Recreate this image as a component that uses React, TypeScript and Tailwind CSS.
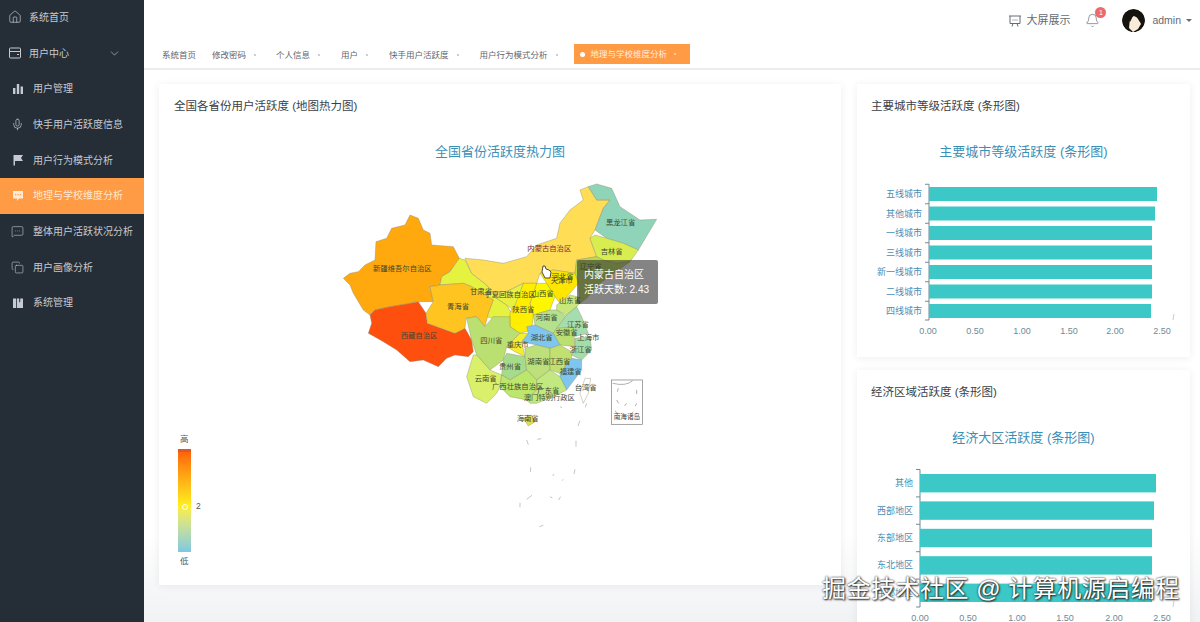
import { Bell, ChevronDown, Copy, House, MessageSquareMore, Mic } from 'lucide-react';

const font = 'font-["Liberation_Sans","Noto_Sans_CJK_SC",sans-serif]';

const WalletIcon = () => (
  <svg width="14" height="14" viewBox="0 0 14 14" fill="none" stroke="currentColor" strokeWidth="1">
    <rect x="1.5" y="2" width="11" height="10" rx="1" />
    <path d="M1.5 5.5h11M9 8.5h2" />
  </svg>
);
const BarsIcon = () => (
  <svg width="12" height="12" viewBox="0 0 12 12" fill="currentColor">
    <rect x="1" y="5" width="2.4" height="6" />
    <rect x="4.8" y="1" width="2.4" height="10" />
    <rect x="8.6" y="3.5" width="2.4" height="7.5" />
  </svg>
);
const FlagIcon = () => (
  <svg width="12" height="12" viewBox="0 0 12 12" fill="currentColor">
    <path d="M1.5 1h9.5L9 4l2 3H3v4.5H1.5z" />
  </svg>
);
const ChatIcon = () => (
  <svg width="12" height="12" viewBox="0 0 12 12" fill="currentColor">
    <path fillRule="evenodd" d="M1 1h10v7.5H7L5 11V8.5H1zM3 4v1.2h1.2V4zm2.4 0v1.2h1.2V4zm2.4 0v1.2H9V4z" />
  </svg>
);
const BookIcon = () => (
  <svg width="12" height="12" viewBox="0 0 12 12" fill="currentColor">
    <path d="M1 1.5h3v9.5H1zM4.8 1.5h2.4v4l1-.8V1.5H11V11H4.8z" />
  </svg>
);
const ScreenIcon = () => (
  <svg width="14" height="14" viewBox="0 0 14 14" fill="none" stroke="currentColor" strokeWidth="1">
    <path d="M1 2h12M2 2v7.5h10V2M5 9.5 4 12.5M9 9.5l1 3" />
    <path d="M4.5 6h1M6.5 6h1M8.5 6h1" />
  </svg>
);

const menu = [
  { label: '系统首页', icon: <House size={14} strokeWidth={1.2} />, x: 'pl-[8px]', gap: 'gap-[7px]' },
  { label: '用户中心', icon: <WalletIcon />, x: 'pl-[8px]', gap: 'gap-[7px]', arrow: true },
  { label: '用户管理', icon: <BarsIcon />, x: 'pl-[12px]', gap: 'gap-[9px]' },
  { label: '快手用户活跃度信息', icon: <Mic size={13} strokeWidth={1.3} />, x: 'pl-[11px]', gap: 'gap-[9px]' },
  { label: '用户行为模式分析', icon: <FlagIcon />, x: 'pl-[12px]', gap: 'gap-[9px]' },
  { label: '地理与学校维度分析', icon: <ChatIcon />, x: 'pl-[12px]', gap: 'gap-[9px]', active: true },
  { label: '整体用户活跃状况分析', icon: <MessageSquareMore size={13} strokeWidth={1.1} />, x: 'pl-[11px]', gap: 'gap-[9px]' },
  { label: '用户画像分析', icon: <Copy size={13} strokeWidth={1.1} />, x: 'pl-[11px]', gap: 'gap-[9px]' },
  { label: '系统管理', icon: <BookIcon />, x: 'pl-[12px]', gap: 'gap-[9px]' },
];

const tags = [
  { label: '系统首页', cls: 'mr-[16px]' },
  { label: '修改密码', close: true, cls: 'mr-[20px]' },
  { label: '个人信息', close: true, cls: 'mr-[21px]' },
  { label: '用户', close: true, cls: 'mr-[21px]' },
  { label: '快手用户活跃度', close: true, cls: 'mr-[21px]' },
  { label: '用户行为模式分析', close: true, cls: 'mr-[16px]' },
];

// provinces, traced in 3x crop coordinates
const provinces: { fill: string; pts: string }[] = [
  { fill: '#ffa90f', pts: '10,325 30,310 55,305 75,285 105,270 108,215 140,205 155,175 195,165 210,135 235,145 250,180 270,190 275,225 340,230 358,265 330,305 305,320 300,345 270,350 280,395 230,395 200,402 150,410 105,420 90,435 70,420 40,370 30,345' },
  { fill: '#ff4f0f', pts: '90,435 105,420 150,410 200,402 235,395 258,430 262,460 345,490 375,475 395,510 400,545 385,560 345,555 320,565 295,590 250,570 210,575 170,540 130,515 85,490 95,460' },
  { fill: '#e5f23f', pts: '305,320 330,305 358,265 375,270 395,310 440,345 470,385 500,405 515,430 510,470 460,445 440,440 460,390 395,350 370,340 300,345' },
  { fill: '#ffc420', pts: '270,350 300,345 370,340 395,350 460,390 445,430 435,470 410,440 378,445 375,475 345,490 262,460 258,430 280,395' },
  { fill: '#ffdd55', pts: '375,265 430,270 490,280 560,260 590,225 650,205 660,160 690,120 730,90 720,60 745,50 770,90 810,90 790,115 765,180 750,205 770,260 710,270 705,310 640,300 600,310 590,340 550,340 500,365 470,385 440,345 395,310' },
  { fill: '#8fd3b8', pts: '745,50 770,42 815,55 840,110 900,150 950,148 925,190 895,240 850,220 800,205 765,180 790,115 810,90 770,90' },
  { fill: '#d8ee50', pts: '765,195 800,205 850,220 895,240 870,275 830,280 790,270 770,260 750,205' },
  { fill: '#b8d850', pts: '710,270 770,260 790,270 830,280 870,275 780,340 740,385 720,400 715,340 705,310' },
  { fill: '#ffe600', pts: '640,300 705,310 715,340 690,370 660,400 645,380 620,340 600,310' },
  { fill: '#fff700', pts: '590,340 620,340 645,380 630,420 580,435 570,400' },
  { fill: '#ffee00', pts: '510,430 550,340 590,340 570,400 580,435 575,480 540,490 510,470' },
  { fill: '#e8f040', pts: '500,365 550,340 520,420 500,405 470,385' },
  { fill: '#c9e87a', pts: '650,405 690,375 730,385 710,410 680,435 650,420' },
  { fill: '#b5e08c', pts: '580,435 630,420 650,420 680,440 650,475 640,490 585,465' },
  { fill: '#a5ddb0', pts: '680,435 710,410 725,440 745,490 700,500 650,475' },
  { fill: '#bbe070', pts: '650,475 700,470 705,530 660,525 640,490' },
  { fill: '#a5ddaa', pts: '705,505 750,500 755,540 725,570 695,555 705,530' },
  { fill: '#7ec6f0', pts: '560,470 585,465 640,490 660,525 630,535 590,525 545,515 565,490' },
  { fill: '#b9e070', pts: '380,445 410,440 435,470 460,440 510,440 510,470 540,490 500,530 490,570 450,600 410,555 395,510' },
  { fill: '#f5ee30', pts: '500,530 540,490 565,490 545,515 555,560 525,545' },
  { fill: '#a6db8c', pts: '490,570 500,550 555,560 560,600 510,630 485,615' },
  { fill: '#bde07a', pts: '555,535 590,525 630,535 630,600 590,630 560,600 555,560' },
  { fill: '#c2e070', pts: '630,535 660,525 695,545 695,565 660,610 630,600' },
  { fill: '#7ec6f0', pts: '695,565 725,570 725,600 680,660 660,620 660,610' },
  { fill: '#daf06a', pts: '380,620 400,555 410,555 450,600 485,615 480,650 470,670 440,700 400,680' },
  { fill: '#bce66c', pts: '480,650 485,615 510,630 560,600 590,630 590,660 560,690 510,680' },
  { fill: '#c2e880', pts: '590,630 630,600 660,620 680,660 640,680 590,700 570,700 560,690 590,660' },
  { fill: '#e0e050', pts: '550,745 575,735 585,755 565,768' },
  { fill: '#ffffff', pts: '735,625 752,625 745,670 730,700 720,670' },
];

const labels: [string, number, number][] = [
  ['新疆维吾尔自治区', 187, 298],
  ['内蒙古自治区', 628, 237],
  ['黑龙江省', 842, 160],
  ['吉林省', 815, 247],
  ['辽宁省', 752, 290],
  ['甘肃省', 423, 365],
  ['青海省', 354, 410],
  ['西藏自治区', 237, 498],
  ['宁夏回族自治区', 510, 376],
  ['河北省', 668, 320],
  ['天津市', 665, 332],
  ['山西省', 608, 371],
  ['山东省', 690, 393],
  ['陕西省', 550, 421],
  ['河南省', 620, 445],
  ['江苏省', 714, 464],
  ['安徽省', 680, 488],
  ['上海市', 745, 504],
  ['四川省', 454, 513],
  ['湖北省', 605, 505],
  ['重庆市', 533, 525],
  ['浙江省', 722, 541],
  ['湖南省', 595, 575],
  ['江西省', 658, 575],
  ['贵州省', 510, 590],
  ['福建省', 692, 606],
  ['云南省', 437, 628],
  ['广西壮族自治区', 533, 651],
  ['广东省', 625, 662],
  ['台湾省', 737, 654],
  ['澳门特别行政区', 628, 684],
  ['海南省', 563, 747],
];

// little islands south of the mainland
const islands = [
  'M320 310l-4 12', 'M300 362l-6 16', 'M140 420l5 14', 'M172 418l12-2', 'M288 422v18', 'M152 502l-1 14',
  'M285 508l-3 14', 'M222 522l-4 6', 'M250 538l-3 4', 'M140 598l16-12', 'M120 608v14', 'M210 590l7 4',
  'M242 590l-6 10', 'M178 680l12-4', 'M240 320l6 4',
];

function MapChart() {
  return (
    <svg width="340" height="420" viewBox="340 170 340 420" className="block">
      <g transform="translate(340 170) scale(0.3333)">
        {provinces.map((p, i) => (
          <polygon key={i} points={p.pts} fill={p.fill} stroke="#8a8a6a" strokeWidth="1.2" strokeLinejoin="round" />
        ))}
        {labels.map(([t, x, y]) => (
          <text key={t} x={x} y={y} textAnchor="middle" dominantBaseline="middle" fontSize="22" fill={t === '内蒙古自治区' ? '#7a2a40' : '#3d4a30'}>
            {t}
          </text>
        ))}
        <rect x="815" y="630" width="93" height="133" fill="#fff" stroke="#777" strokeWidth="2" />
        <path d="M818 640q40 10 60-8M835 655l-3 10M830 690l6 10M890 660v12M890 700l-4 8M860 700l-6 8M826 722l4 8M880 725l-10 10" stroke="#888" strokeWidth="2" fill="none" />
        <text x="861" y="746" textAnchor="middle" fontSize="20" fill="#444">南海诸岛</text>
      </g>
      <g transform="translate(480 300) scale(0.3333)">
        {islands.map((d) => (
          <path key={d} d={d} stroke="#a8a8a8" strokeWidth="2" fill="none" />
        ))}
      </g>
      <path d="M543 266l2 0 1 3 3 1 2 2-1 6-5 0-3-6z" fill="#fff" stroke="#222" strokeWidth="0.8" />
    </svg>
  );
}

function BarChart({ rows, ticks, axisX, top, step, barH, bottom, height }: {
  rows: [string, number][];
  ticks: number[];
  axisX: number;
  top: number;
  step: number;
  barH: number;
  bottom: number;
  height: number;
}) {
  return (
    <svg width="333" height={height} className="block">
      <line x1={axisX} y1={top - (step - barH) / 2} x2={axisX} y2={bottom} stroke="#6e8c98" strokeWidth="1" />
      {rows.map(([name, w], i) => {
        const y = top + i * step;
        return (
          <g key={name}>
            <line x1={axisX - 4} x2={axisX} y1={y - (step - barH) / 2} y2={y - (step - barH) / 2} stroke="#6e8c98" />
            <rect x={axisX} y={y} width={w} height={barH} fill="#3cc8c6" />
            <text x={axisX - 7} y={y + barH / 2 + 3} textAnchor="end" fontSize="9" fill="#4a8db5">{name}</text>
          </g>
        );
      })}
      <line x1={axisX - 4} x2={axisX} y1={bottom} y2={bottom} stroke="#6e8c98" />
      <line x1={317} x2={316} y1={bottom - 6} y2={bottom} stroke="#c4ccd0" />
      {ticks.map((x, i) => (
        <text key={x} x={x} y={bottom + 14} textAnchor="middle" fontSize="9" fill="#6e8c98">
          {(i * 0.5).toFixed(2)}
        </text>
      ))}
    </svg>
  );
}

export default function App() {
  return (
    <div className={`${font} flex w-[1200px] h-[622px] overflow-hidden relative bg-white`}>
      <aside className="w-[144px] shrink-0 bg-[#252d37] text-[#c6cad0] text-[10px] -mt-[0.5px]">
        {menu.map((m) => (
          <div
            key={m.label}
            className={`flex items-center h-[35.7px] ${m.x} ${m.gap} ${m.active ? 'bg-[#ff9a45] text-[#ffe9d6]' : ''}`}
          >
            {m.icon}
            <span>{m.label}</span>
            {m.arrow && <ChevronDown size={13} strokeWidth={1.2} className="ml-auto mr-[23px]" />}
          </div>
        ))}
      </aside>

      <div className="flex-1 flex flex-col min-w-0">
        <header className="h-[41px] flex items-center justify-end text-[#666b72]">
          <ScreenIcon />
          <span className="ml-[4px] text-[11px]">大屏展示</span>
          <div className="relative ml-[15px] mr-[22px]">
            <Bell size={15} strokeWidth={1.1} />
            <span className="absolute -top-[6px] -right-[6px] w-[11px] h-[11px] rounded-full bg-[#ee6a6a] text-white text-[7px] leading-[11px] text-center">1</span>
          </div>
          <svg width="23" height="23" viewBox="0 0 23 23" className="rounded-full">
            <circle cx="11.5" cy="11.5" r="11.5" fill="#17130f" />
            <path d="M8 9l4-2 4 2 3 6-3 5-5 3-4-4z" fill="#f6ecd8" />
            <path d="M6 2l5 5-3 6-3-5zM13 2l6 4-1 7-4-6z" fill="#17130f" />
          </svg>
          <span className="ml-[7px] text-[10.5px]">admin</span>
          <span className="ml-[5px] mr-[8px] w-0 h-0 border-x-[3px] border-x-transparent border-t-[3px] border-t-[#666b72]" />
        </header>

        <nav className="h-[29px] flex items-center pl-[18px] pt-[1px] border-b-2 border-[#eaecef] text-[8.5px] text-[#5f656d]">
          {tags.map((t) => (
            <div key={t.label} className={`flex items-center ${t.cls}`}>
              <span>{t.label}</span>
              {t.close && <span className="ml-[8px] w-[2px] h-[2px] rounded-full bg-[#b8bcc2]" />}
            </div>
          ))}
          <div className="flex items-center h-[20px] w-[116px] -mt-[2px] pl-[6px] bg-[#ff9a45] text-[#ffeedd]">
            <span className="w-[5px] h-[5px] rounded-full bg-white" />
            <span className="ml-[6px]">地理与学校维度分析</span>
            <span className="ml-[7px] w-[2px] h-[2px] rounded-full bg-[#ffd9b5]" />
          </div>
        </nav>

        <main className="flex-1 min-h-0 flex gap-[16px] pl-[15px] pt-[14px] bg-gradient-to-b from-white from-[84%] to-[#f1f2f4]">
          <section className="relative w-[682px] h-[501px] shrink-0 bg-white shadow-[0_1px_8px_rgba(0,0,0,0.07)]">
            <h3 className="pl-[15px] pt-[15px] text-[11.5px] leading-[14px] text-[#3b3f45]">全国各省份用户活跃度 (地图热力图)</h3>
            <h2 className="mt-[31px] text-center text-[13px] leading-[16px] text-[#3a8fb7]">全国省份活跃度热力图</h2>
            <div className="flex items-start mt-[10px]">
              <div className="ml-[19px] mt-[264px] w-[42px] flex flex-col text-[8.5px] text-[#555]">
                <span className="ml-[2px] leading-[10px]">高</span>
                <div className="relative ml-0 mt-[5px] w-[13px] h-[103px] bg-gradient-to-b from-[#ff5a0a] via-[#ffee20] via-[55%] to-[#7ec8e0]">
                  <span className="absolute top-0 left-0 w-full h-[3px] bg-[#e2572a]" />
                  <span className="absolute bottom-0 left-0 w-full h-[2px] bg-[#7ec8e0]" />
                  <span className="absolute top-[55px] left-[3.5px] w-[6px] h-[6px] rounded-full border border-white" />
                  <span className="absolute top-[52px] left-[18px] leading-[10px]">2</span>
                </div>
                <span className="ml-[2px] mt-[4px] leading-[10px]">低</span>
              </div>
              <div className="ml-[120px]"><MapChart /></div>
            </div>
            <div className="absolute left-[418px] top-[176px] w-[81px] h-[44px] rounded-[2px] bg-[rgba(50,50,50,0.6)] text-white text-[10px] leading-[15px] pl-[7px] pt-[7px]">
              <div>内蒙古自治区</div>
              <div>活跃天数: 2.43</div>
            </div>
          </section>

          <div className="w-[333px] shrink-0 flex flex-col gap-[13px]">
            <section className="h-[273px] shrink-0 bg-white shadow-[0_1px_8px_rgba(0,0,0,0.07)]">
              <h3 className="pl-[14px] pt-[15px] text-[11.5px] leading-[14px] text-[#3b3f45]">主要城市等级活跃度 (条形图)</h3>
              <h2 className="mt-[31px] text-center text-[13px] leading-[16px] text-[#3a8fb7]">主要城市等级活跃度 (条形图)</h2>
              <BarChart
                axisX={72}
                top={27}
                step={19.5}
                barH={14}
                bottom={160}
                height={180}
                ticks={[71, 118, 165, 212, 258, 305]}
                rows={[['五线城市', 228], ['其他城市', 226], ['一线城市', 223], ['三线城市', 223], ['新一线城市', 223], ['二线城市', 223], ['四线城市', 222]]}
              />
            </section>
            <section className="h-[273px] shrink-0 bg-white shadow-[0_1px_8px_rgba(0,0,0,0.07)]">
              <h3 className="pl-[14px] pt-[15px] text-[11.5px] leading-[14px] text-[#3b3f45]">经济区域活跃度 (条形图)</h3>
              <h2 className="mt-[31px] text-center text-[13px] leading-[16px] text-[#3a8fb7]">经济大区活跃度 (条形图)</h2>
              <BarChart
                axisX={63}
                top={28}
                step={27.4}
                barH={18.4}
                bottom={161}
                height={180}
                ticks={[63, 111, 160, 208, 257, 305]}
                rows={[['其他', 236], ['西部地区', 234], ['东部地区', 232], ['东北地区', 232], ['中部地区', 232]]}
              />
            </section>
          </div>
        </main>
      </div>

      <div className="absolute left-[822px] top-[575px] text-[24px] tracking-[0.5px] leading-[28px] text-white whitespace-nowrap [text-shadow:0_0_2px_#222,1px_1px_2px_#222]">
        掘金技术社区 @ 计算机源启编程
      </div>
    </div>
  );
}
